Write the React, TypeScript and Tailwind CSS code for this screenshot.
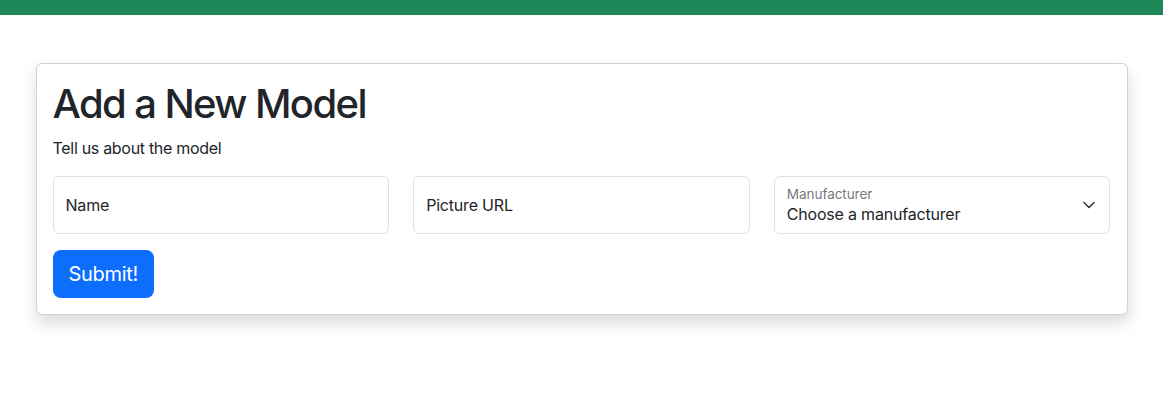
import React from "react";

export default function App() {
  const font = { fontFamily: "Inter, 'Noto Sans', 'Liberation Sans', sans-serif" };
  return (
    <div className="min-h-[408px] bg-white text-[#212529]" style={font}>
      <div className="h-[15px] bg-[#1f8858]" />
      <div className="mx-auto mt-12 w-[1092px] rounded-[6px] border border-[rgba(0,0,0,0.175)] bg-white p-4 shadow-[0_8px_16px_rgba(0,0,0,0.15)]">
        <h1 className="mb-2 text-[40px] font-medium leading-[48px] tracking-[-1.6px]">Add a New Model</h1>
        <p className="mb-4 text-[16px] leading-6 tracking-[-0.3px]">Tell us about the model</p>
        <div className="mb-4 grid grid-cols-3 gap-6">
          <div className="flex h-[58px] items-center rounded-[6px] border border-[#dee2e6] px-3 text-[16px] leading-6 tracking-[-0.2px]">
            Name
          </div>
          <div className="flex h-[58px] items-center rounded-[6px] border border-[#dee2e6] px-3 text-[16px] leading-6 tracking-[-0.2px]">
            Picture URL
          </div>
          <div className="relative flex h-[58px] flex-col rounded-[6px] border border-[#dee2e6] pl-3 pr-9 pt-[9px]">
            <span className="text-[13.6px] leading-[16px] tracking-[-0.1px] text-[rgba(33,37,41,0.65)]">Manufacturer</span>
            <span className="text-[16px] leading-6 tracking-[-0.2px]">Choose a manufacturer</span>
            <svg
              className="absolute right-[14px] top-[24px]"
              width="12"
              height="8"
              viewBox="0 0 12 8"
              fill="none"
              stroke="#343a40"
              strokeWidth="1.6"
              strokeLinecap="round"
              strokeLinejoin="round"
            >
              <path d="M1 1.5 6 6.5 11 1.5" />
            </svg>
          </div>
        </div>
        <button className="h-12 rounded-lg bg-[#0d6efd] px-4 text-[20px] leading-[30px] tracking-[-0.3px] text-white">
          Submit!
        </button>
      </div>
    </div>
  );
}
